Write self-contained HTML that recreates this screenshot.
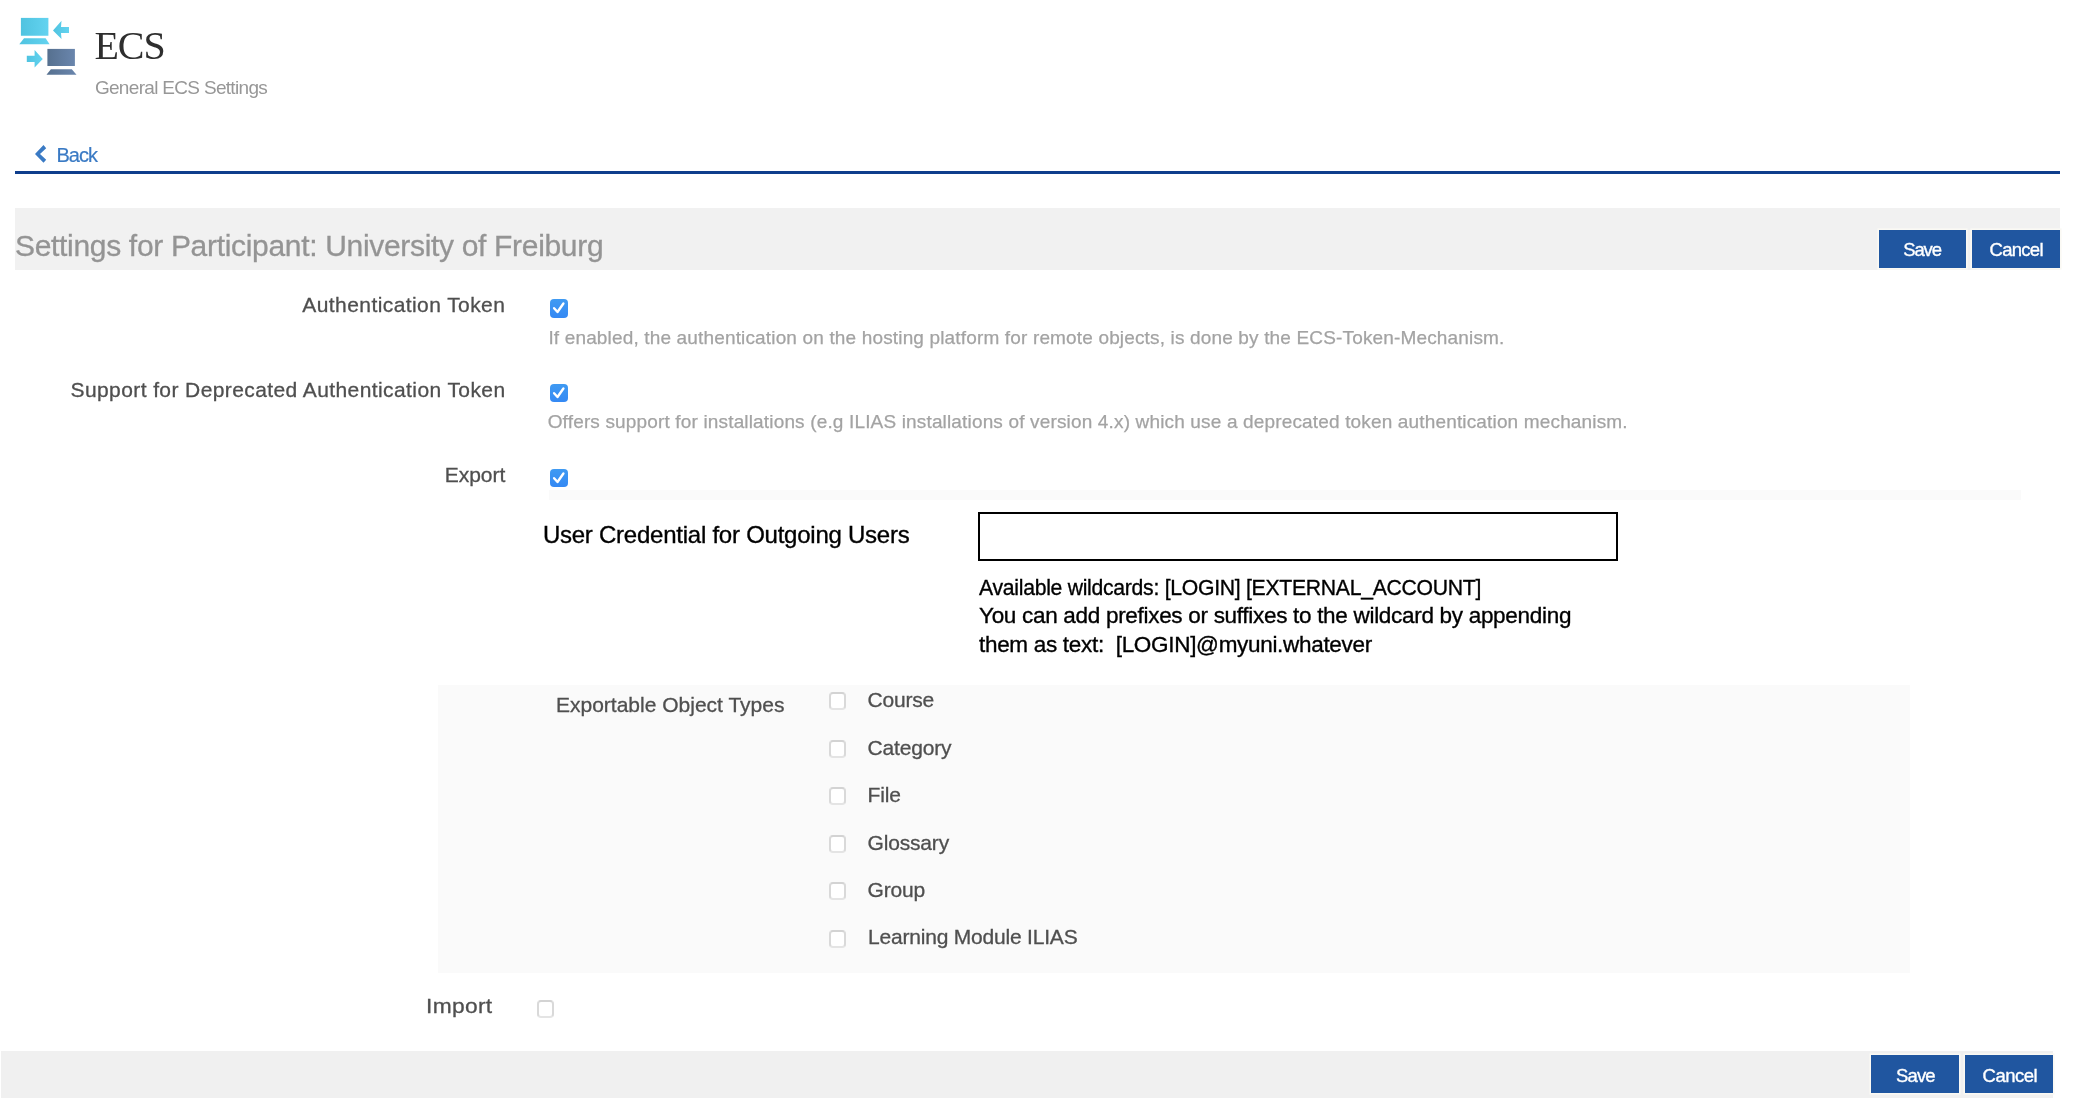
<!DOCTYPE html>
<html><head><meta charset="utf-8">
<style>
html,body{margin:0;padding:0;background:#fff;width:2076px;height:1120px;overflow:hidden;position:relative}
body{font-family:"Liberation Sans",sans-serif;color:#4c4c4c}
.a{position:absolute;white-space:nowrap;line-height:1}
.band{position:absolute;background:#f1f1f1}
.btn{position:absolute;background:#2056a0;box-shadow:0 0 0 1.6px #faf9f4}
.cb{position:absolute;width:18px;height:18.5px;border-radius:4px;background:linear-gradient(#3f9af2,#3589f4)}
.cb svg{position:absolute;left:0;top:0}
.cbo{position:absolute;width:13px;height:14px;border:2px solid #d8d8d8;border-color:#d3d3d3 #d9d9d9 #e4e4e4 #d9d9d9;border-radius:4px;background:#fff}
</style></head><body>
<div id="root" style="position:absolute;left:0;top:0;width:2076px;height:1120px;will-change:transform">

<svg class="a" style="left:0;top:0" width="90" height="90" viewBox="0 0 90 90">
  <defs>
    <linearGradient id="g1" x1="0" x2="1"><stop offset="0" stop-color="#4fc3e0"/><stop offset="1" stop-color="#63d3f0"/></linearGradient>
    <linearGradient id="g2" x1="0" x2="1"><stop offset="0" stop-color="#56708f"/><stop offset="1" stop-color="#6a86ad"/></linearGradient>
  </defs>
  <rect x="20.9" y="17.9" width="27.5" height="17.85" fill="url(#g1)"/>
  <polygon points="24,38.25 45.6,38.25 49.6,44.2 19.3,44.2" fill="url(#g1)"/>
  <polygon points="53,30.4 61.5,20.75 61,27 69,27 69,32.9 61,32.9 61.5,38.9" fill="url(#g1)"/>
  <rect x="47.4" y="48.9" width="27.5" height="17.1" fill="url(#g2)"/>
  <polygon points="50.9,69.2 71.8,69.2 76.5,74.8 46.5,74.8" fill="url(#g2)"/>
  <polygon points="26.8,55.75 34.6,55.75 34.6,50.1 42.75,58.9 34.6,67.6 34.6,62 26.8,62" fill="url(#g1)"/>
</svg>

<svg class="a" style="left:0;top:130px" width="60" height="40" viewBox="0 130 60 40">
  <polygon points="43.5,145 46.2,148.2 40,154 46.2,159.7 43.5,162.8 35,154" fill="#3a7ac4"/>
</svg>
<div class="a" style="left:15px;top:171px;width:2045px;height:3px;background:#0e3e8c"></div>

<div class="band" style="left:15px;top:208px;width:2045px;height:62.4px"></div>
<div class="btn" style="left:1879px;top:230px;width:87px;height:37.5px"></div>
<div class="btn" style="left:1972px;top:230px;width:88px;height:37.5px"></div>

<div class="cb" style="left:550px;top:299px"><svg width="18" height="18" viewBox="0 0 18 18"><polyline points="4.1,9.25 7.5,13 13.4,4.5" fill="none" stroke="#fff" stroke-width="2.4" stroke-linecap="round" stroke-linejoin="round"/></svg></div>
<div class="cb" style="left:550px;top:383.6px"><svg width="18" height="18" viewBox="0 0 18 18"><polyline points="4.1,9.25 7.5,13 13.4,4.5" fill="none" stroke="#fff" stroke-width="2.4" stroke-linecap="round" stroke-linejoin="round"/></svg></div>
<div class="cb" style="left:550.3px;top:468.75px"><svg width="18" height="18" viewBox="0 0 18 18"><polyline points="4.1,9.25 7.5,13 13.4,4.5" fill="none" stroke="#fff" stroke-width="2.4" stroke-linecap="round" stroke-linejoin="round"/></svg></div>
<div class="a" style="left:549px;top:490px;width:1472px;height:10px;background:#fafafa"></div>

<div class="a" style="left:978px;top:512px;width:636px;height:44.5px;border:2px solid #000"></div>

<div class="a" style="left:438px;top:685px;width:1472px;height:288px;background:#fafafa"></div>
<div class="cbo" style="left:829px;top:692px"></div>
<div class="cbo" style="left:829px;top:739.5px"></div>
<div class="cbo" style="left:829px;top:787px"></div>
<div class="cbo" style="left:829px;top:834.5px"></div>
<div class="cbo" style="left:829px;top:882px"></div>
<div class="cbo" style="left:829px;top:929.5px"></div>
<div class="cbo" style="left:537px;top:1000px"></div>

<div class="band" style="left:1px;top:1051px;width:2052px;height:46.5px;background:#f0f0f0"></div>
<div class="btn" style="left:1871px;top:1055px;width:88px;height:38px"></div>
<div class="btn" style="left:1965px;top:1055px;width:88px;height:38px"></div>

<div class="a" id="ecs" style="left:94.40px;top:26.00px;font-size:40px;letter-spacing:-1.000px;color:#2e2e2e;font-family:'Liberation Serif',serif">ECS</div>
<div class="a" id="gen" style="left:94.90px;top:78.27px;font-size:19px;letter-spacing:-0.684px;color:#979797">General ECS Settings</div>
<div class="a" id="back" style="left:56.40px;top:144.59px;font-size:20px;letter-spacing:-0.933px;color:#3a7ac4;-webkit-text-stroke:0.2px #3a7ac4">Back</div>
<div class="a" id="title" style="left:15.00px;top:231.10px;font-size:30px;letter-spacing:-0.319px;color:#949494;-webkit-text-stroke:0.3px #949494">Settings for Participant: University of Freiburg</div>
<div class="a" id="save1" style="left:1903.20px;top:241.21px;font-size:18.5px;letter-spacing:-1.133px;color:#ffffff;-webkit-text-stroke:0.35px #ffffff">Save</div>
<div class="a" id="cancel1" style="left:1989.50px;top:241.21px;font-size:18.5px;letter-spacing:-0.720px;color:#ffffff;-webkit-text-stroke:0.35px #ffffff">Cancel</div>
<div class="a" id="l1" style="left:302.30px;top:294.42px;font-size:21px;letter-spacing:0.421px;color:#4f4f4f;-webkit-text-stroke:0.3px #4f4f4f">Authentication Token</div>
<div class="a" id="d1" style="left:548.40px;top:327.51px;font-size:19px;letter-spacing:0.156px;color:#a3a3a3;-webkit-text-stroke:0.25px #a3a3a3">If enabled, the authentication on the hosting platform for remote objects, is done by the ECS-Token-Mechanism.</div>
<div class="a" id="l2" style="left:70.50px;top:378.92px;font-size:21px;letter-spacing:0.405px;color:#4f4f4f;-webkit-text-stroke:0.3px #4f4f4f">Support for Deprecated Authentication Token</div>
<div class="a" id="d2" style="left:547.70px;top:412.41px;font-size:19px;letter-spacing:0.157px;color:#a3a3a3;-webkit-text-stroke:0.25px #a3a3a3">Offers support for installations (e.g ILIAS installations of version 4.x) which use a deprecated token authentication mechanism.</div>
<div class="a" id="l3" style="left:444.70px;top:464.02px;font-size:21px;letter-spacing:0.000px;color:#4f4f4f;-webkit-text-stroke:0.3px #4f4f4f">Export</div>
<div class="a" id="uc" style="left:542.90px;top:523.28px;font-size:24px;letter-spacing:-0.242px;color:#000;-webkit-text-stroke:0.35px #000">User Credential for Outgoing Users</div>
<div class="a" id="w1" style="left:979.00px;top:576.75px;font-size:22.5px;letter-spacing:-0.300px;color:#000;transform:scaleX(0.9417);transform-origin:0 0;-webkit-text-stroke:0.35px #000">Available wildcards: [LOGIN] [EXTERNAL_ACCOUNT]</div>
<div class="a" id="w2" style="left:979.00px;top:604.75px;font-size:22.5px;letter-spacing:-0.300px;color:#000;-webkit-text-stroke:0.35px #000">You can add prefixes or suffixes to the wildcard by appending</div>
<div class="a" id="w3" style="left:979.00px;top:634.45px;font-size:22.5px;letter-spacing:-0.306px;color:#000;-webkit-text-stroke:0.35px #000">them as text:&nbsp; [LOGIN]@myuni.whatever</div>
<div class="a" id="eot" style="left:556.00px;top:694.02px;font-size:21px;letter-spacing:0.000px;color:#4f4f4f;-webkit-text-stroke:0.3px #4f4f4f">Exportable Object Types</div>
<div class="a" id="o1" style="left:867.50px;top:689.32px;font-size:21px;letter-spacing:-0.200px;color:#4f4f4f;-webkit-text-stroke:0.3px #4f4f4f">Course</div>
<div class="a" id="o2" style="left:867.50px;top:736.82px;font-size:21px;letter-spacing:-0.170px;color:#4f4f4f;-webkit-text-stroke:0.3px #4f4f4f">Category</div>
<div class="a" id="o3" style="left:867.50px;top:784.32px;font-size:21px;letter-spacing:-0.170px;color:#4f4f4f;-webkit-text-stroke:0.3px #4f4f4f">File</div>
<div class="a" id="o4" style="left:867.50px;top:831.82px;font-size:21px;letter-spacing:-0.170px;color:#4f4f4f;-webkit-text-stroke:0.3px #4f4f4f">Glossary</div>
<div class="a" id="o5" style="left:867.50px;top:879.32px;font-size:21px;letter-spacing:-0.170px;color:#4f4f4f;-webkit-text-stroke:0.3px #4f4f4f">Group</div>
<div class="a" id="o6" style="left:868.00px;top:925.92px;font-size:21px;letter-spacing:-0.200px;color:#4f4f4f;-webkit-text-stroke:0.3px #4f4f4f">Learning Module ILIAS</div>
<div class="a" id="imp" style="left:426.10px;top:995.32px;font-size:21px;letter-spacing:0.300px;color:#4f4f4f;transform:scaleX(1.0836);transform-origin:0 0;-webkit-text-stroke:0.3px #4f4f4f">Import</div>
<div class="a" id="save2" style="left:1896.00px;top:1066.71px;font-size:18.5px;letter-spacing:-0.867px;color:#ffffff;-webkit-text-stroke:0.35px #ffffff">Save</div>
<div class="a" id="cancel2" style="left:1982.60px;top:1066.71px;font-size:18.5px;letter-spacing:-0.520px;color:#ffffff;-webkit-text-stroke:0.35px #ffffff">Cancel</div>

</div>
</body></html>
